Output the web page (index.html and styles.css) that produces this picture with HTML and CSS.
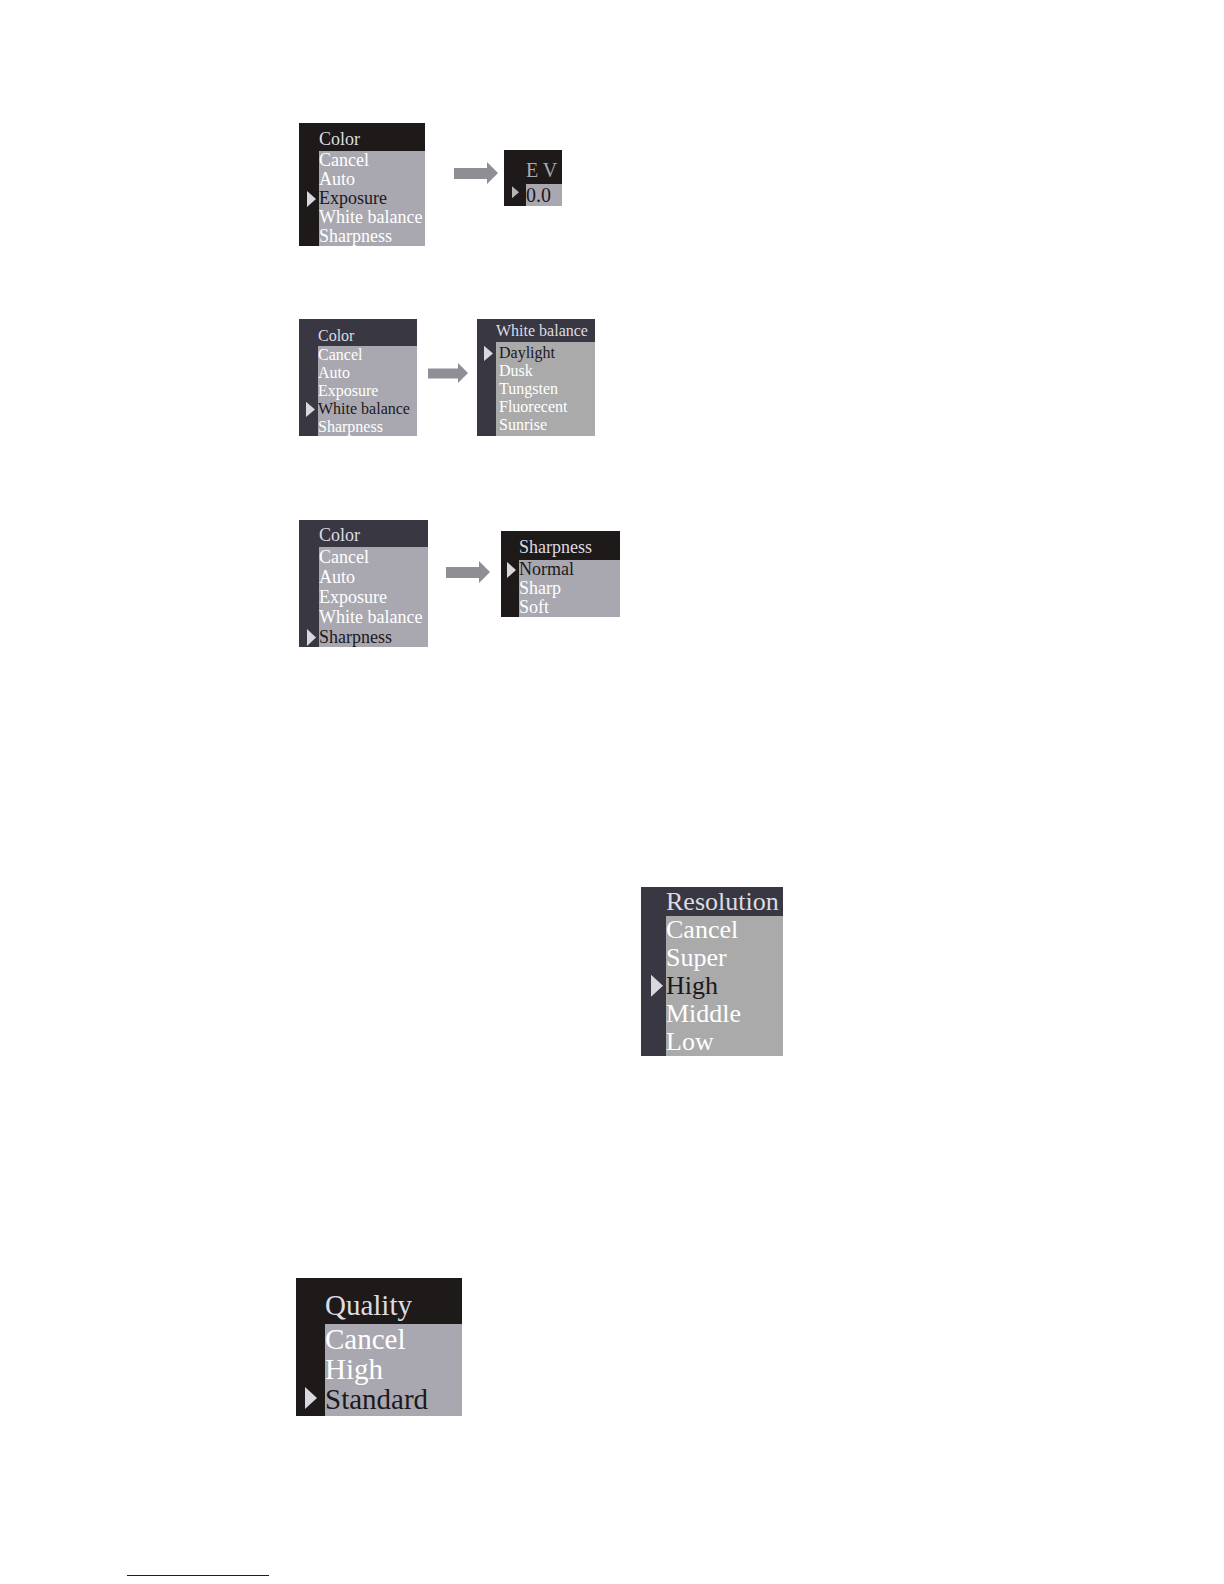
FILE: index.html
```html
<!DOCTYPE html>
<html lang="en">
<head>
    <meta charset="utf-8">
    <meta name="viewport" content="width=device-width, initial-scale=1">
    <title>Camera menus</title>
    <link rel="stylesheet" href="styles.css">
</head>
<body>
<main>
    <!-- Color > Exposure -->
    <section class="step exposure">
        <div class="menu black">
            <h2>Color</h2>
            <ul>
                <li>Cancel</li>
                <li>Auto</li>
                <li class="selected">Exposure</li>
                <li>White balance</li>
                <li>Sharpness</li>
            </ul>
        </div>
        <svg class="arrow" viewBox="0 0 44 22" preserveAspectRatio="none"><path d="M0 6H33V0L44 11L33 22V17H0Z"/></svg>
        <div class="menu black ev">
            <h2>E V</h2>
            <ul>
                <li class="selected">0.0</li>
            </ul>
        </div>
    </section>

    <!-- Color > White balance -->
    <section class="step balance">
        <div class="menu">
            <h2>Color</h2>
            <ul>
                <li>Cancel</li>
                <li>Auto</li>
                <li>Exposure</li>
                <li class="selected">White balance</li>
                <li>Sharpness</li>
            </ul>
        </div>
        <svg class="arrow" viewBox="0 0 44 22" preserveAspectRatio="none"><path d="M0 6H33V0L44 11L33 22V17H0Z"/></svg>
        <div class="menu gray lights">
            <h2>White balance</h2>
            <ul>
                <li class="selected">Daylight</li>
                <li>Dusk</li>
                <li>Tungsten</li>
                <li>Fluorecent</li>
                <li>Sunrise</li>
            </ul>
        </div>
    </section>

    <!-- Color > Sharpness -->
    <section class="step sharpness">
        <div class="menu">
            <h2>Color</h2>
            <ul>
                <li>Cancel</li>
                <li>Auto</li>
                <li>Exposure</li>
                <li>White balance</li>
                <li class="selected">Sharpness</li>
            </ul>
        </div>
        <svg class="arrow" viewBox="0 0 44 22" preserveAspectRatio="none"><path d="M0 6H33V0L44 11L33 22V17H0Z"/></svg>
        <div class="menu black levels">
            <h2>Sharpness</h2>
            <ul>
                <li class="selected">Normal</li>
                <li>Sharp</li>
                <li>Soft</li>
            </ul>
        </div>
    </section>

    <section class="step resolution">
        <div class="menu gray">
            <h2>Resolution</h2>
            <ul>
                <li>Cancel</li>
                <li>Super</li>
                <li class="selected">High</li>
                <li>Middle</li>
                <li>Low</li>
            </ul>
        </div>
    </section>

    <section class="step quality">
        <div class="menu black">
            <h2>Quality</h2>
            <ul>
                <li>Cancel</li>
                <li>High</li>
                <li class="selected">Standard</li>
            </ul>
        </div>
    </section>
</main>
<hr>
</body>
</html>
```
FILE: styles.css
```css
body {
    margin: 0;
    background: #fff;
    font-family: "Liberation Serif", "Times New Roman", serif;
}

main {
    padding: 123px 0 0 296px;
}

.step {
    display: flex;
    align-items: flex-start;
    padding-left: 3px;
}

/* the dark left gutter is the menu's own padding */
.menu {
    box-sizing: border-box;
    width: 126px;
    padding-left: 20px;
    background: #393842;
    color: #fff;
    font-size: 18px;
    line-height: 19px;
    white-space: nowrap;
}

.menu.black {
    background: #1f1a1a;
}

.menu h2 {
    margin: 0;
    padding: 7px 0 2px;
    font-size: inherit;
    font-weight: normal;
    color: #dddce2;
}

.menu ul {
    margin: 0;
    padding: 0;
    list-style: none;
    background: #a9a8b0;
}

.menu.gray ul {
    background: #aaa;
}

.menu li {
    position: relative;
}

.menu .selected {
    color: #1b191d;
}

/* cursor in the gutter */
.menu .selected::before {
    content: "";
    position: absolute;
    top: 10%;
    right: 100%;
    width: 9px;
    height: 85%;
    margin-right: 3px;
    background: #d9d8de;
    clip-path: polygon(0 0, 100% 50%, 0 100%);
}

.arrow {
    flex: none;
    width: 44px;
    height: 22px;
    fill: #8f8e95;
}

.exposure {
    margin-bottom: 73px;
}

.exposure .arrow {
    margin: 39px 6px 0 29px;
}

.menu.ev {
    width: 58px;
    margin-top: 27px;
    padding-left: 22px;
    font-size: 20px;
    line-height: 22px;
}

.ev h2 {
    padding: 9px 0 3px;
    color: #aaa9ae;
}

.ev .selected::before {
    width: 7px;
    height: 12px;
    margin-right: 7px;
    background: #b5b4b9;
}

.balance {
    margin-bottom: 84px;
}

.balance .menu {
    width: 118px;
    padding-left: 19px;
    font-size: 16px;
    line-height: 18px;
}

.balance h2 {
    padding: 8px 0 1px;
}

.balance .arrow {
    width: 40px;
    height: 20px;
    margin: 44px 9px 0 11px;
}

.lights h2 {
    padding: 3px 0 2px;
}

.lights ul {
    padding: 2px 0 2px 3px;
}

.lights .selected::before {
    margin-right: 6px;
}

.sharpness {
    margin-bottom: 240px;
}

.sharpness .menu {
    width: 129px;
    line-height: 20px;
}

.sharpness h2 {
    padding: 5px 0 2px;
}

.sharpness .arrow {
    margin: 41px 11px 0 18px;
}

.sharpness .levels {
    width: 119px;
    margin-top: 11px;
    padding-left: 18px;
    line-height: 19px;
}

.levels h2 {
    padding: 7px 0 3px;
}

.resolution {
    margin-bottom: 222px;
    padding-left: 345px;
}

.resolution .menu {
    width: 142px;
    padding-left: 25px;
    font-size: 26px;
    line-height: 28px;
}

.resolution h2 {
    padding: 1px 0 0;
}

.resolution .selected::before,
.quality .selected::before {
    width: 12px;
    height: 22px;
}

.quality {
    padding-left: 0;
}

.quality .menu {
    width: 166px;
    padding-left: 29px;
    font-size: 29px;
    line-height: 30px;
}

.quality h2 {
    padding: 12px 0 4px;
}

.quality ul {
    padding-bottom: 2px;
}

.quality .selected::before {
    margin-right: 8px;
}

hr {
    width: 142px;
    margin: 159px 0 8px 127px;
    border: 0;
    border-top: 1px solid #15156e;
}
```
